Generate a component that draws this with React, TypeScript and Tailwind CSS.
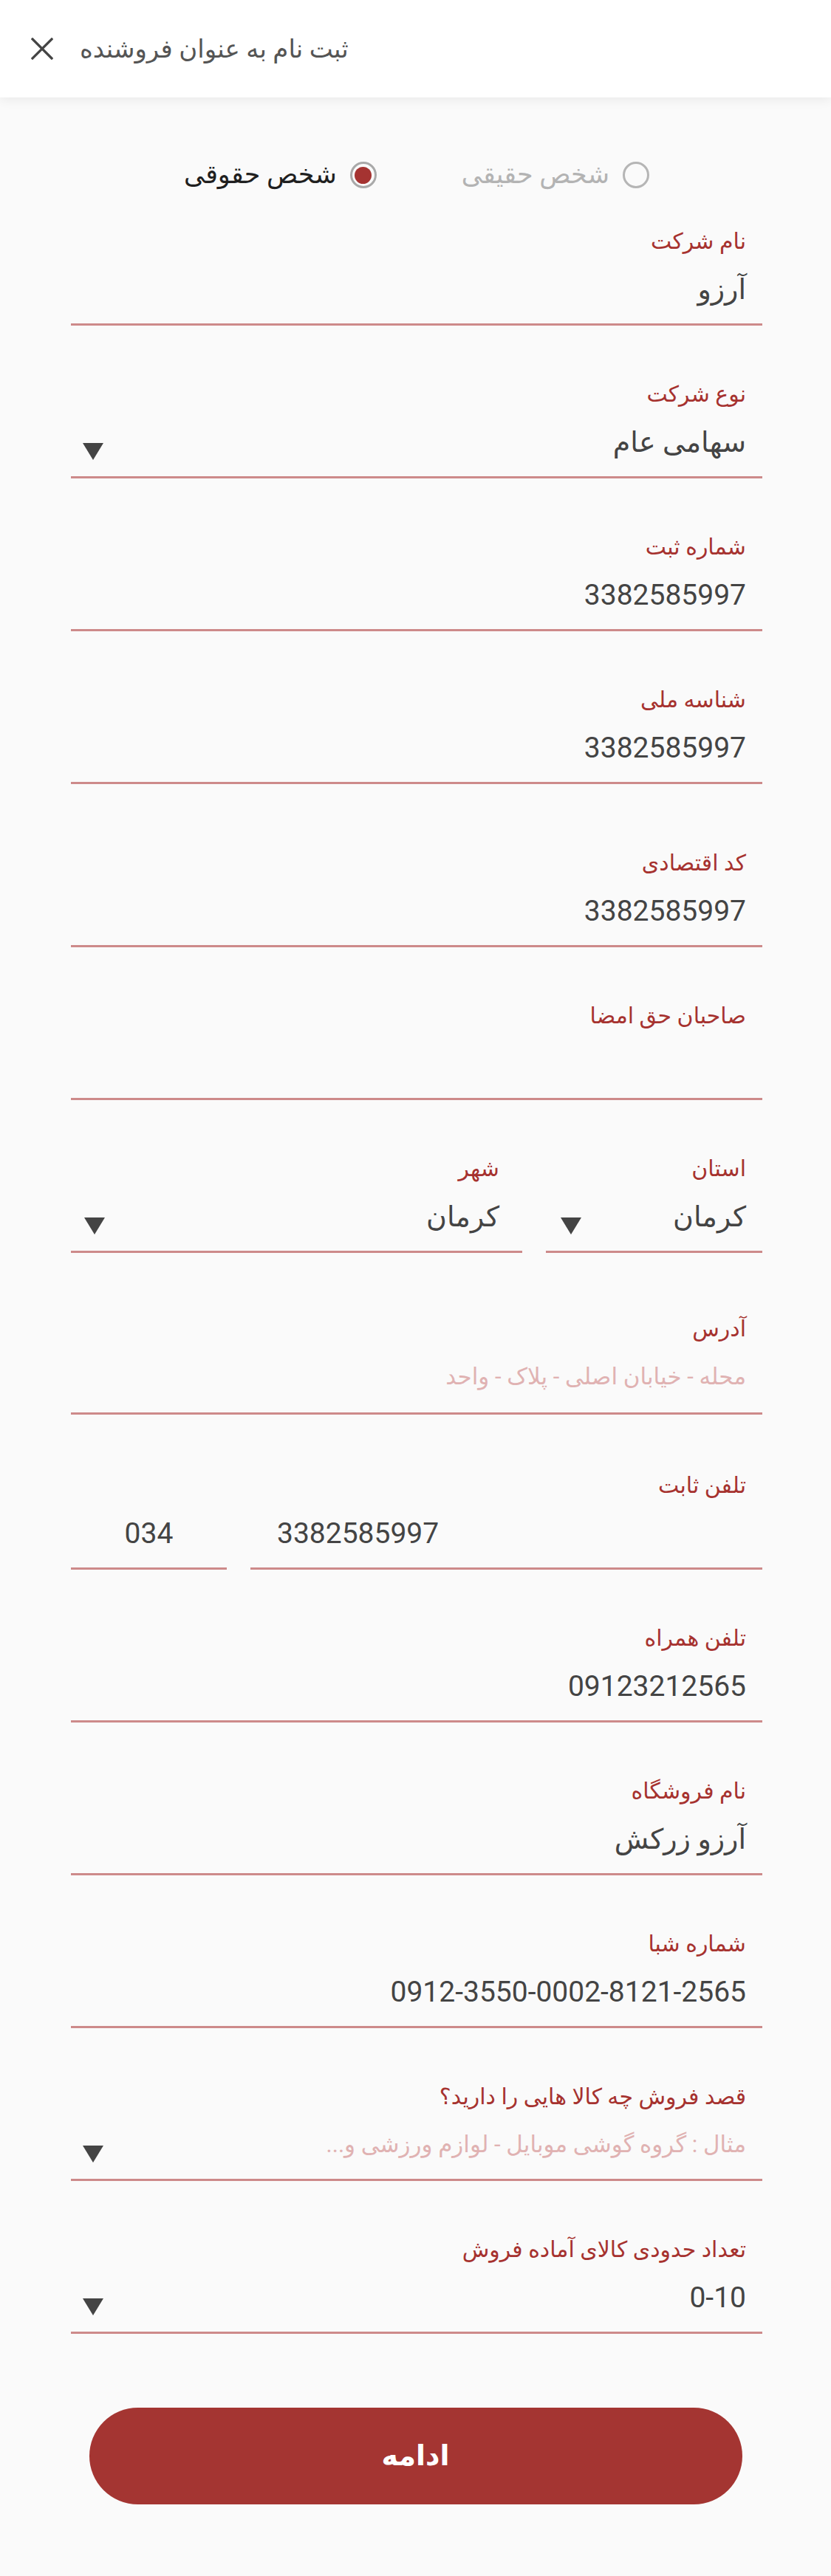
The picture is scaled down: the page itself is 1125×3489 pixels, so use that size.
import React from 'react';

function Caret() {
  return (
    <svg width="28" height="23" viewBox="0 0 28 23" className="shrink-0">
      <polygon points="0,0 28,0 14,23" fill="#444444" />
    </svg>
  );
}

function CloseIcon() {
  return (
    <svg width="30" height="30" viewBox="0 0 30 30" className="shrink-0">
      <path d="M2 2 L28 28 M28 2 L2 28" stroke="#444444" strokeWidth="3.2" strokeLinecap="square" fill="none" />
    </svg>
  );
}

function Radio({ checked, label }: { checked: boolean; label: string }) {
  return (
    <label className="flex items-center gap-[18px]">
      <span
        className={`flex h-[36px] w-[36px] items-center justify-center rounded-full border-[3px] ${
          checked ? 'border-[#a9a9a9]' : 'border-[#b5b5b5]'
        }`}
      >
        {checked ? <span className="h-[23px] w-[23px] rounded-full bg-[#a53331]" /> : null}
      </span>
      <span className={`text-[35px] leading-[40px] ${checked ? 'text-[#1f1f1f]' : 'text-[#b3b3b3]'}`}>{label}</span>
    </label>
  );
}

type FieldProps = {
  label: string;
  value?: string;
  placeholder?: string;
  select?: boolean;
  ltr?: boolean;
  top?: string;
  bottom?: string;
};

function Field({ label, value, placeholder, select, ltr, top = 'pt-[73px]', bottom = 'pb-[22px]' }: FieldProps) {
  return (
    <div className={`border-b-[3px] border-[#cd8a8a] ${top} ${bottom}`}>
      <div className="pr-[22px] text-[30px] leading-[40px] text-[#a6322f]">{label}</div>
      <div className="mt-[21px] flex h-[48px] items-end justify-between pr-[22px] pl-[16px]">
        {value ? (
          <span dir={ltr ? 'ltr' : undefined} className={`${ltr ? 'text-[39px]' : 'text-[38px]'} leading-[48px] text-[#444444]`}>
            {value}
          </span>
        ) : placeholder ? (
          <span className="pb-[2px] text-[31px] leading-[44px] text-[#e0b2b2]">{placeholder}</span>
        ) : (
          <span />
        )}
        {select ? <Caret /> : null}
      </div>
    </div>
  );
}

export default function App() {
  return (
    <div className="min-h-screen bg-[#fafafa] font-['Roboto','DejaVu_Sans',sans-serif]">
      <header dir="ltr" className="relative z-10 flex h-[132px] items-center bg-white pl-[42px] shadow-[0_3px_14px_rgba(0,0,0,0.07)]">
        <CloseIcon />
        <span dir="rtl" className="ml-[36px] text-[34px] leading-[40px] text-[#555555]">
          ثبت نام به عنوان فروشنده
        </span>
      </header>

      <main dir="rtl" className="pl-[96px] pr-[93px]">
        <div className="mt-[85px] flex h-[40px] items-center justify-center gap-[115px]">
          <Radio checked={false} label="شخص حقیقی" />
          <Radio checked label="شخص حقوقی" />
        </div>

        <Field label="نام شرکت" value="آرزو" top="pt-[50px]" />
        <Field label="نوع شرکت" value="سهامی عام" select />
        <Field label="شماره ثبت" value="3382585997" ltr />
        <Field label="شناسه ملی" value="3382585997" ltr />
        <Field label="کد اقتصادی" value="3382585997" ltr top="pt-[87px]" />
        <Field label="صاحبان حق امضا" />

        <div className="flex gap-[32px]">
          <div className="w-[293px] shrink-0 border-b-[3px] border-[#cd8a8a] pt-[73px] pb-[22px]">
            <div className="pr-[22px] text-[30px] leading-[40px] text-[#a6322f]">استان</div>
            <div className="mt-[21px] flex h-[48px] items-end justify-between pr-[22px] pl-[20px]">
              <span className="text-[38px] leading-[48px] text-[#444444]">کرمان</span>
              <Caret />
            </div>
          </div>
          <div className="flex-1 border-b-[3px] border-[#cd8a8a] pt-[73px] pb-[22px]">
            <div className="pr-[31px] text-[30px] leading-[40px] text-[#a6322f]">شهر</div>
            <div className="mt-[21px] flex h-[48px] items-end justify-between pr-[31px] pl-[18px]">
              <span className="text-[38px] leading-[48px] text-[#444444]">کرمان</span>
              <Caret />
            </div>
          </div>
        </div>

        <Field label="آدرس" placeholder="محله - خیابان اصلی - پلاک - واحد" top="pt-[83px]" bottom="pb-[24px]" />

        <div className="pt-[76px]">
          <div className="pr-[22px] text-[30px] leading-[40px] text-[#a6322f]">تلفن ثابت</div>
          <div className="mt-[21px] flex gap-[32px]">
            <div className="flex-1 border-b-[3px] border-[#cd8a8a] pb-[22px]">
              <div dir="ltr" className="pl-[36px] text-[39px] leading-[48px] text-[#444444]">3382585997</div>
            </div>
            <div className="w-[211px] shrink-0 border-b-[3px] border-[#cd8a8a] pb-[22px]">
              <div dir="ltr" className="text-center text-[39px] leading-[48px] text-[#444444]">034</div>
            </div>
          </div>
        </div>

        <Field label="تلفن همراه" value="09123212565" ltr />
        <Field label="نام فروشگاه" value="آرزو زرکش" />
        <Field label="شماره شبا" value="0912-3550-0002-8121-2565" ltr />
        <Field label="قصد فروش چه کالا هایی را دارید؟" placeholder="مثال : گروه گوشی موبایل - لوازم ورزشی و..." select />
        <Field label="تعداد حدودی کالای آماده فروش" value="0-10" ltr select />
      </main>

      <div className="flex justify-center pt-[100px] pb-[100px]">
        <button className="flex h-[131px] w-[884px] items-center justify-center rounded-full bg-[#a43532] text-[38px] font-bold text-white">
          ادامه
        </button>
      </div>
    </div>
  );
}
